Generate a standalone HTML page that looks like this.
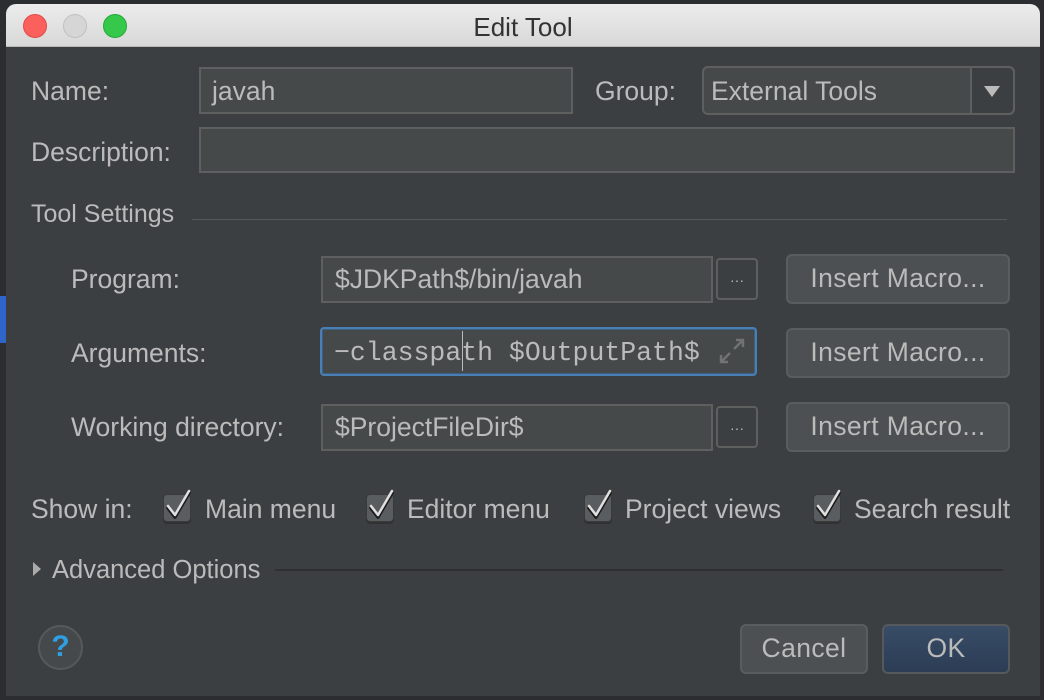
<!DOCTYPE html>
<html><head><meta charset="utf-8"><style>
*{margin:0;padding:0;box-sizing:border-box}
body{width:1044px;height:700px;background:#2b2d30;position:relative;overflow:hidden;font-family:"Liberation Sans",sans-serif;color:#bbbbbb;font-size:26.5px}
.a{position:absolute;white-space:nowrap}
.win{position:absolute;left:6px;top:4px;width:1034px;height:692px;background:#3c3f41;border-radius:10px 10px 0 0;overflow:hidden}
.tb{position:absolute;left:0;top:0;width:100%;height:43px;background:linear-gradient(#ececec,#d8d8d8);border-bottom:1px solid #b8b8b8}
.dot{position:absolute;top:10px;width:24px;height:24px;border-radius:50%}
.f{position:absolute;background:#45494a;border:2px solid #5e6060;}
.btn{position:absolute;background:#4c5052;border:2px solid #5a5d5f;border-radius:6px;text-align:center;line-height:45px;letter-spacing:0.4px}
.cb{position:absolute;width:28px;height:28px;background:#5a5d5f;border:1px solid #3a3a3a;border-radius:4px;box-shadow:0 2px 0 #2f3133}
.lbl{position:absolute;line-height:30px;white-space:nowrap}
</style></head><body>
<div style="position:absolute;left:0;top:296px;width:6px;height:47px;background:#2f65ca"></div>
<div class="win">
 <div class="tb">
  <div class="dot" style="left:17px;background:#fc605c;border:1px solid #de4b47"></div>
  <div class="dot" style="left:57px;background:#d6d6d6;border:1px solid #c0c0c0"></div>
  <div class="dot" style="left:97px;background:#35c84a;border:1px solid #24a838"></div>
  <div class="a" style="left:0;width:100%;text-align:center;top:8px;color:#333;font-size:26px">Edit Tool</div>
 </div>
</div>
<div class="lbl" style="left:31px;top:76px">Name:</div>
<div class="f" style="left:199px;top:67px;width:374px;height:47px"></div>
<div class="lbl" style="left:212px;top:76px">javah</div>
<div class="lbl" style="left:595px;top:76px">Group:</div>
<div class="f" style="left:702px;top:66px;width:313px;height:49px;border-radius:6px;background:#45494a"></div>
<div style="position:absolute;left:970px;top:68px;width:43px;height:45px;background:#3c3f41;border-left:2px solid #5e6060;border-radius:0 5px 5px 0"></div>
<div class="a" style="left:984px;top:86px;width:0;height:0;border-left:8px solid transparent;border-right:8px solid transparent;border-top:11px solid #bbb"></div>
<div class="lbl" style="left:711px;top:76px">External Tools</div>
<div class="lbl" style="left:31px;top:137px">Description:</div>
<div class="f" style="left:199px;top:127px;width:816px;height:46px"></div>
<div class="lbl" style="left:31px;top:199px;font-size:25px">Tool Settings</div>
<div style="position:absolute;left:192px;top:219px;width:815px;height:1px;background:#55585a"></div>

<div class="lbl" style="left:71px;top:264px">Program:</div>
<div class="f" style="left:321px;top:256px;width:392px;height:47px"></div>
<div class="lbl" style="left:335px;top:264px">$JDKPath$/bin/javah</div>
<div class="f" style="left:716px;top:258px;width:42px;height:42px;background:#3c3f41;border-radius:4px;text-align:center;font-size:14px;line-height:40px">···</div>
<div class="btn" style="left:786px;top:254px;width:224px;height:50px">Insert Macro...</div>

<div class="lbl" style="left:71px;top:338px">Arguments:</div>
<div class="f" style="left:320px;top:327px;width:437px;height:49px;border:2px solid #4a7fb5;border-radius:4px;box-shadow:inset 0 0 0 1px #3d5f80"></div>
<div class="lbl" style="left:334px;top:338px;font-family:'Liberation Mono',monospace;font-size:26.5px">−classpath $OutputPath$</div>
<div style="position:absolute;left:462px;top:331px;width:1px;height:40px;background:#bbb"></div>
<svg class="a" style="left:718px;top:337px" width="28" height="28" viewBox="0 0 28 28" fill="none" stroke="#707274" stroke-width="2.5"><path d="M16 12L25 3M18 3h7v7M12 16L3 25M3 18v7h7"/></svg>
<div class="btn" style="left:786px;top:328px;width:224px;height:50px">Insert Macro...</div>

<div class="lbl" style="left:71px;top:412px">Working directory:</div>
<div class="f" style="left:321px;top:404px;width:392px;height:47px"></div>
<div class="lbl" style="left:335px;top:412px">$ProjectFileDir$</div>
<div class="f" style="left:716px;top:406px;width:42px;height:42px;background:#3c3f41;border-radius:4px;text-align:center;font-size:14px;line-height:40px">···</div>
<div class="btn" style="left:786px;top:402px;width:224px;height:50px">Insert Macro...</div>

<div class="lbl" style="left:31px;top:494px">Show in:</div>
<div class="cb" style="left:163px;top:494px"></div>
<div class="cb" style="left:366px;top:494px"></div>
<div class="cb" style="left:584px;top:494px"></div>
<div class="cb" style="left:813px;top:494px"></div>
<svg class="a" style="left:0;top:0" width="1044" height="700" fill="none" stroke-linecap="round" stroke-linejoin="round">
 <g stroke="#1a1a1a" stroke-width="3.5"><path d="M168 508l7 9 14-24"/><path d="M371 508l7 9 14-24"/><path d="M589 508l7 9 14-24"/><path d="M818 508l7 9 14-24"/></g>
 <g stroke="#e0e0e0" stroke-width="2.5"><path d="M168 506l7 9 14-24"/><path d="M371 506l7 9 14-24"/><path d="M589 506l7 9 14-24"/><path d="M818 506l7 9 14-24"/></g>
</svg>
<div class="lbl" style="left:205px;top:494px">Main menu</div>
<div class="lbl" style="left:407px;top:494px">Editor menu</div>
<div class="lbl" style="left:625px;top:494px">Project views</div>
<div class="lbl" style="left:854px;top:494px">Search result</div>

<div class="a" style="left:33px;top:562px;width:0;height:0;border-top:7px solid transparent;border-bottom:7px solid transparent;border-left:8px solid #aaa"></div>
<div class="lbl" style="left:52px;top:555px;font-size:25.5px">Advanced Options</div>
<div style="position:absolute;left:275px;top:569px;width:728px;height:2px;background:#2e3032"></div>

<div style="position:absolute;left:38px;top:625px;width:45px;height:45px;border-radius:50%;background:#46494b;border:2px solid #56595b;color:#2e9fe0;font-weight:bold;font-size:30px;text-align:center;line-height:40px">?</div>
<div class="btn" style="left:740px;top:624px;width:128px;height:50px">Cancel</div>
<div class="btn" style="left:882px;top:624px;width:128px;height:50px;background:linear-gradient(#384c66,#2c3d55);border-color:#55595c">OK</div>
</body></html>
